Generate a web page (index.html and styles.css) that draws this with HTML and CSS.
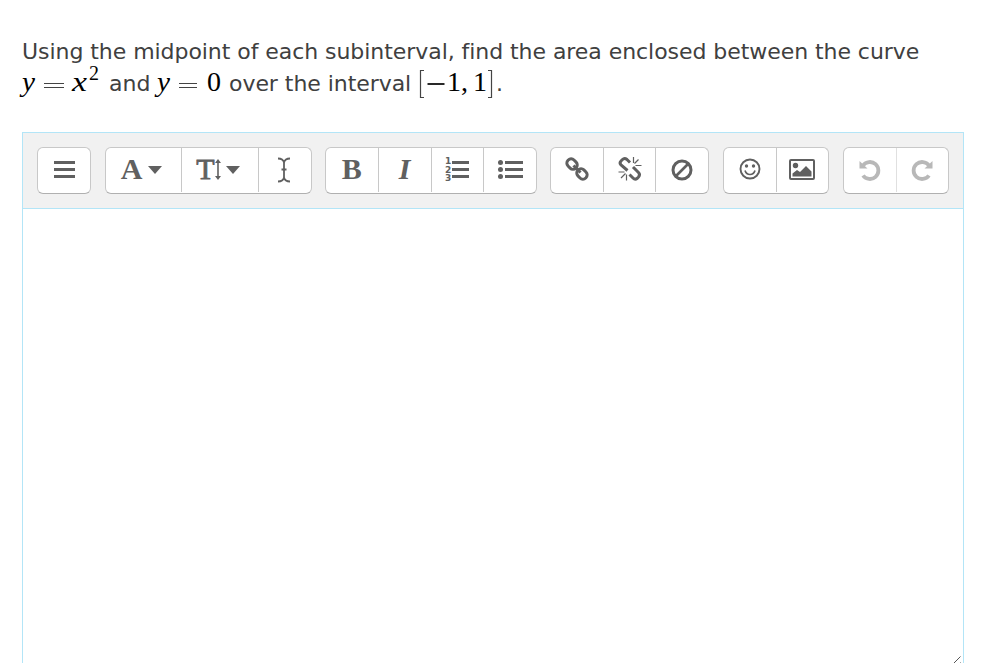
FILE: index.html
```
<!DOCTYPE html>
<html lang="en">
<head>
    <meta charset="utf-8">
    <title>Midpoint area</title>
    <link rel="stylesheet" href="styles.css">
</head>
<body>
    <div class="question">
        <div class="line first">Using the midpoint of each subinterval, find the area enclosed between the curve</div>
        <div class="line second">
            <svg class="math" width="79" height="36">
                <text class="var" x="0" y="25" textLength="13" lengthAdjust="spacingAndGlyphs">y</text>
                <path class="rule" d="M22 17.500h20M22 21.500h20"/>
                <text class="var" x="50" y="25" textLength="15" lengthAdjust="spacingAndGlyphs">x</text>
                <text class="sup" x="67" y="14">2</text>
            </svg>
            <span class="word and">and</span>
            <svg class="math" width="64" height="36">
                <text class="var" x="0" y="25" textLength="13" lengthAdjust="spacingAndGlyphs">y</text>
                <path class="rule" d="M22 17.500h18M22 21.500h18"/>
                <text x="50" y="25" textLength="14" lengthAdjust="spacingAndGlyphs">0</text>
            </svg>
            <span class="word over">over the interval</span>
            <svg class="math" width="76" height="36">
                <path class="bracket" d="M6 4.500H2.500V31.500H6M70 4.500h3.500V31.500H70"/>
                <path class="minus" d="M9.500 18h17"/>
                <text x="29" y="25">1</text>
                <text x="43" y="25">,</text>
                <text x="55" y="25">1</text>
            </svg>
            <span class="word stop">.</span>
        </div>
    </div>

    <div class="editor">
        <div class="toolbar">
            <div class="group single">
                <button><svg width="21" height="22"><path class="bar" d="M0 3.500h21M0 10.500h21M0 17.500h21"/></svg></button>
            </div>
            <div class="group fonts">
                <button class="color"><span class="letter">A</span><i class="caret"></i></button>
                <button class="size"><span class="letter thin">T</span><svg width="6" height="22"><path d="M3 3v15" stroke-width="1.600"/><path class="fill" d="M3 0l3 4H0zM3 21l3-4H0z"/></svg><i class="caret"></i></button>
                <button class="clear"><svg width="14" height="26"><path d="M1 1.500q5 0 6 4q1-4 6-4M7 5v16M1 24.500q5 0 6-4q1 4 6 4M4.500 12.500h5" stroke-width="1.800"/></svg></button>
            </div>
            <div class="group styles">
                <button><span class="letter">B</span></button>
                <button><span class="letter italic">I</span></button>
                <button><svg width="25" height="28"><path class="bar" d="M7 6.500h17M7 13.500h17M7 20.500h17"/><text class="num" x="0" y="8">1</text><text class="num" x="0" y="16.500">2</text><text class="num" x="0" y="25">3</text></svg></button>
                <button><svg width="25" height="22"><path class="bar" d="M7 3.500h18M7 10.500h18M7 17.500h18"/><g class="fill"><circle cx="2.500" cy="3.500" r="2.500"/><circle cx="2.500" cy="10.500" r="2.500"/><circle cx="2.500" cy="17.500" r="2.500"/></g></svg></button>
            </div>
            <div class="group links">
                <button><svg width="24" height="26"><g transform="rotate(45 12 12)" stroke-width="3"><rect x="-.5" y="7.800" width="11" height="8.400" rx="4"/><rect x="13.500" y="7.800" width="11" height="8.400" rx="4"/><path d="M7 12h10"/></g></svg></button>
                <button><svg width="24" height="26"><path d="M12 5.500L9 2.500Q6.500 .5 4.500 2.500L3 4Q1 6 3 8L9.500 13.500M15 10L20.500 15.500Q22.500 17.500 20.500 20L19 21.500Q17 23 15 21L11.500 17.500" stroke-width="3"/><path d="M15.500 0v6M20.500 2.500l-4 4M17.500 8.500h6M.5 15h6M7.500 16.500L3 21M8.500 17.500v6" stroke-width="1.200"/></svg></button>
                <button><svg width="22" height="22"><circle cx="11" cy="11" r="9" stroke-width="3"/><path d="M5 17L17 5" stroke-width="2.600"/></svg></button>
            </div>
            <div class="group pair">
                <button><svg width="22" height="24"><circle cx="11" cy="11" r="9.500" stroke-width="1.900"/><path d="M6 12.500q1.300 4 5 4t5-4" stroke-width="1.700"/><g class="fill"><circle cx="7.500" cy="8" r="1.700"/><circle cx="14.500" cy="8" r="1.700"/></g></svg></button>
                <button><svg width="26" height="22"><rect x="1" y="1" width="24" height="19" rx="1" stroke-width="2"/><g class="fill"><circle cx="6.500" cy="6.500" r="2.700"/><path d="M3.500 17.500v-3L8 11l3 2 6-6 5.500 5.500v5z"/></g></svg></button>
            </div>
            <div class="group pair disabled">
                <button><svg width="22" height="22"><path d="M4 6.500A8.500 8.500 0 1 1 4 16.500" stroke-width="3.800"/><path class="fill" d="M.5 2v7.500H8.500z"/></svg></button>
                <button><svg width="22" height="22"><path d="M18 6.500A8.500 8.500 0 1 0 18 16.500" stroke-width="3.800"/><path class="fill" d="M21.500 2v7.500H13.500z"/></svg></button>
            </div>
        </div>
        <div class="content" contenteditable="true"></div>
        <svg class="grip" width="8" height="8"><path d="M.5 7.500l7-7M6.500 7.500l1-1"/></svg>
    </div>
</body>
</html>
```
FILE: styles.css
```
* {
    box-sizing: border-box;
}
body {
    margin: 0;
    height: 663px;
    padding: 36px 42px 0 22px;
    overflow: hidden;
    display: flex;
    flex-direction: column;
    background: #fff;
    color: #404040;
    font-family: Verdana, "DejaVu Sans", sans-serif;
    font-size: 22px;
}
.question {
    flex: none;
    height: 96px;
    white-space: nowrap;
}
.line {
    height: 32px;
    line-height: 32px;
}
.first {
    letter-spacing: -0.055px;
}
.second {
    display: flex;
}
.math {
    flex: none;
    margin-top: -2px;
    overflow: visible;
    font-family: "Liberation Serif", serif;
    font-size: 28px;
    fill: #000;
    stroke: none;
}
.math .var {
    font-style: italic;
    font-size: 28px;
}
.math .sup {
    font-size: 20px;
}
.rule, .minus, .bracket {
    fill: none;
    stroke: #444;
    stroke-width: 1.2px;
}
.minus {
    stroke: #111;
    stroke-width: 1.8px;
}
.and {
    width: 56px;
    padding-left: 8px;
}
.over {
    width: 197px;
    padding-left: 8px;
    letter-spacing: -0.05px;
}
.stop {
    padding-left: 2px;
}
.editor {
    flex: none;
    height: 540px;
    width: 942px;
    position: relative;
    border: 1px solid #b3e5f7;
}
.toolbar {
    height: 76px;
    padding: 14px;
    display: flex;
    background: #f1f1f1;
    border-bottom: 1px solid #b3e5f7;
}
.group {
    flex: none;
    display: flex;
    height: 47px;
    margin-right: 14px;
    background: #fff;
    border: 1px solid #c8c8c8;
    border-bottom-color: #b0b0b0;
    border-radius: 6px;
    overflow: hidden;
}
.single {
    width: 54px;
}
.fonts {
    width: 207px;
    margin-right: 13px;
}
.styles {
    width: 212px;
    margin-right: 13px;
}
.links {
    width: 159px;
}
.pair {
    width: 106px;
}
button {
    flex: 1;
    display: flex;
    align-items: center;
    justify-content: center;
    height: 44px;
    padding: 0 0 1px;
    border: 0;
    border-right: 1px solid #c8c8c8;
    background: none;
    color: #606060;
}
button:last-child {
    border-right: 0;
}
button.color {
    flex: 0 0 76px;
    padding-right: 4px;
}
button.size {
    flex: 0 0 77px;
    padding-right: 4px;
}
button.clear {
    padding-right: 2px;
}
button svg {
    flex: none;
    overflow: visible;
    fill: none;
    stroke: #606060;
}
.fill {
    fill: #606060;
    stroke: none;
}
.bar {
    stroke-width: 3px;
}
.num {
    fill: #606060;
    stroke: none;
    font: bold 9px "DejaVu Sans", sans-serif;
}
.letter {
    font: bold 30px/42px "Liberation Serif", serif;
    padding-bottom: 2px;
}
.thin {
    font-weight: normal;
    -webkit-text-stroke: 0.8px #606060;
}
.italic {
    font-style: italic;
}
.caret {
    border: 7px solid transparent;
    border-top: 8px solid #606060;
    border-bottom: 0;
    margin-left: 6px;
}
.size .caret {
    margin-left: 5px;
}
.disabled button {
    border-color: #e0e0e0;
}
.disabled svg {
    stroke: #b8b8b8;
}
.disabled .fill {
    fill: #b8b8b8;
}
.content {
    height: 462px;
    outline: none;
}
.grip {
    position: absolute;
    right: 2px;
    top: 523px;
    stroke: #555;
}
```
